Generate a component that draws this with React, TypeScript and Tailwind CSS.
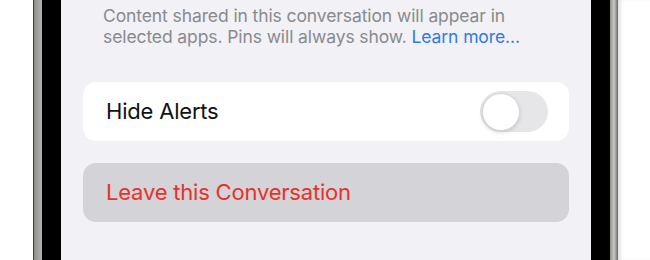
import React from 'react';

const Toggle: React.FC = () => (
  <div className="w-[68px] h-[41px] rounded-full bg-[#e6e6e9] p-[2px] flex items-center">
    <div className="w-[38px] h-[38px] rounded-full bg-white border border-[#d6d6d9] shadow-[0_2px_4px_rgba(0,0,0,0.12)]" />
  </div>
);

const App: React.FC = () => {
  return (
    <div className="w-[650px] h-[260px] bg-white flex overflow-hidden" style={{ fontFamily: 'Inter, "Liberation Sans", sans-serif' }}>
      <div className="w-[33px] shrink-0 bg-white" />

      {/* phone frame */}
      <div className="flex h-full shrink-0">
        <div className="w-[9px] border-l border-[#3e3e3e] bg-gradient-to-r from-[#8d8d8a] to-[#b4b4b0]" />
        <div className="w-[19px] bg-black" />

        <div className="w-[530px] h-full bg-[#f1f1f6] px-[22px] flex flex-col">
          <p className="pl-[20px] pr-4 pt-[5px] text-[17.5px] leading-[21px] text-[#8a8a8e] tracking-[-0.1px]">
            Content shared in this conversation will appear in selected apps. Pins will always show.{' '}
            <span className="text-[#2f7be3]">Learn more...</span>
          </p>

          <div className="mt-[35px] h-[59px] bg-white rounded-[13px] flex items-center justify-between pl-[23px] pr-[21px]">
            <span className="text-[22px] text-[#111] tracking-[-0.2px]">Hide Alerts</span>
            <Toggle />
          </div>

          <div className="mt-[22px] h-[59px] bg-[#d3d3d8] rounded-[13px] flex items-center pl-[23px]">
            <span className="text-[22px] text-[#e5322b] tracking-[-0.2px]">Leave this Conversation</span>
          </div>
        </div>

        <div className="w-[19px] bg-black" />
        <div className="w-[8px] bg-gradient-to-r from-[#8f8f8c] via-[#c9c9c6] to-[#6a6a68]" />
      </div>

      <div className="flex-1 bg-white shadow-[inset_4px_0_4px_-2px_rgba(0,0,0,0.15)]" />
    </div>
  );
};

export default App;
